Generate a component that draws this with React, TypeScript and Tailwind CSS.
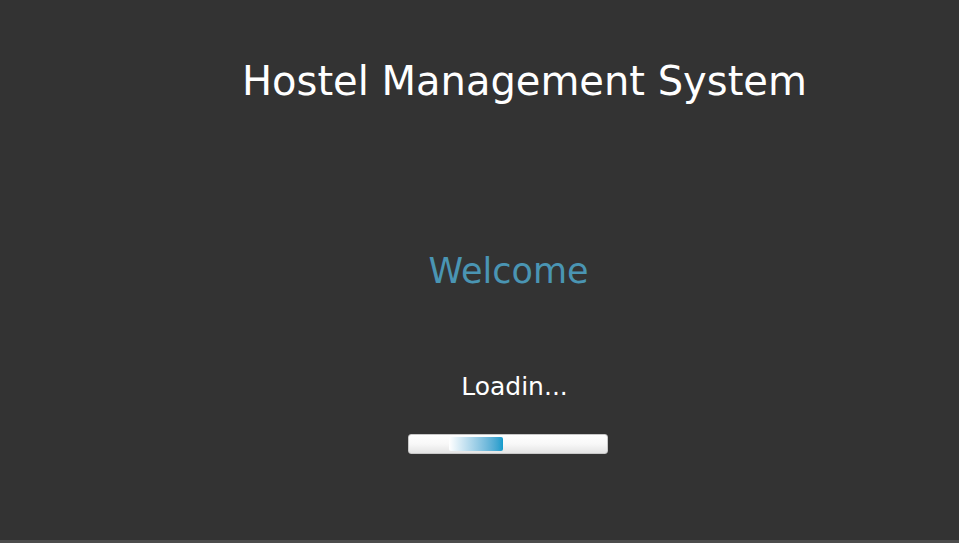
export default function App() {
  return (
    <div className="w-[959px] h-[543px] bg-[#333333] flex flex-col overflow-hidden" style={{ fontFamily: '"DejaVu Sans", sans-serif' }}>
      <div className="flex-1 relative">
        <div className="absolute left-[242px] top-[56px] text-[40px] leading-[50px] text-white whitespace-nowrap">Hostel Management System</div>
        <div className="absolute left-0 right-0 top-[250px] text-center text-[35px] leading-[42px] text-[#4a95b3] pl-[58px]">Welcome</div>
        <div className="absolute left-0 right-0 top-[372px] text-center text-[25px] leading-[30px] text-white pl-[70px]">Loadin...</div>
        <div className="absolute left-[408px] top-[434px] w-[200px] h-[20px] rounded-[3px] border border-[#c8c8c8] bg-gradient-to-b from-[#ffffff] via-[#f8f8f8] to-[#e4e4e4]">
          <div className="absolute left-[40px] top-[2px] w-[54px] h-[14px] rounded-[2px] bg-gradient-to-r from-[#ffffff] to-[#0e9bcb]" />
        </div>
      </div>
      <div className="h-[3px] bg-[#4c4c4c]" />
    </div>
  );
}
